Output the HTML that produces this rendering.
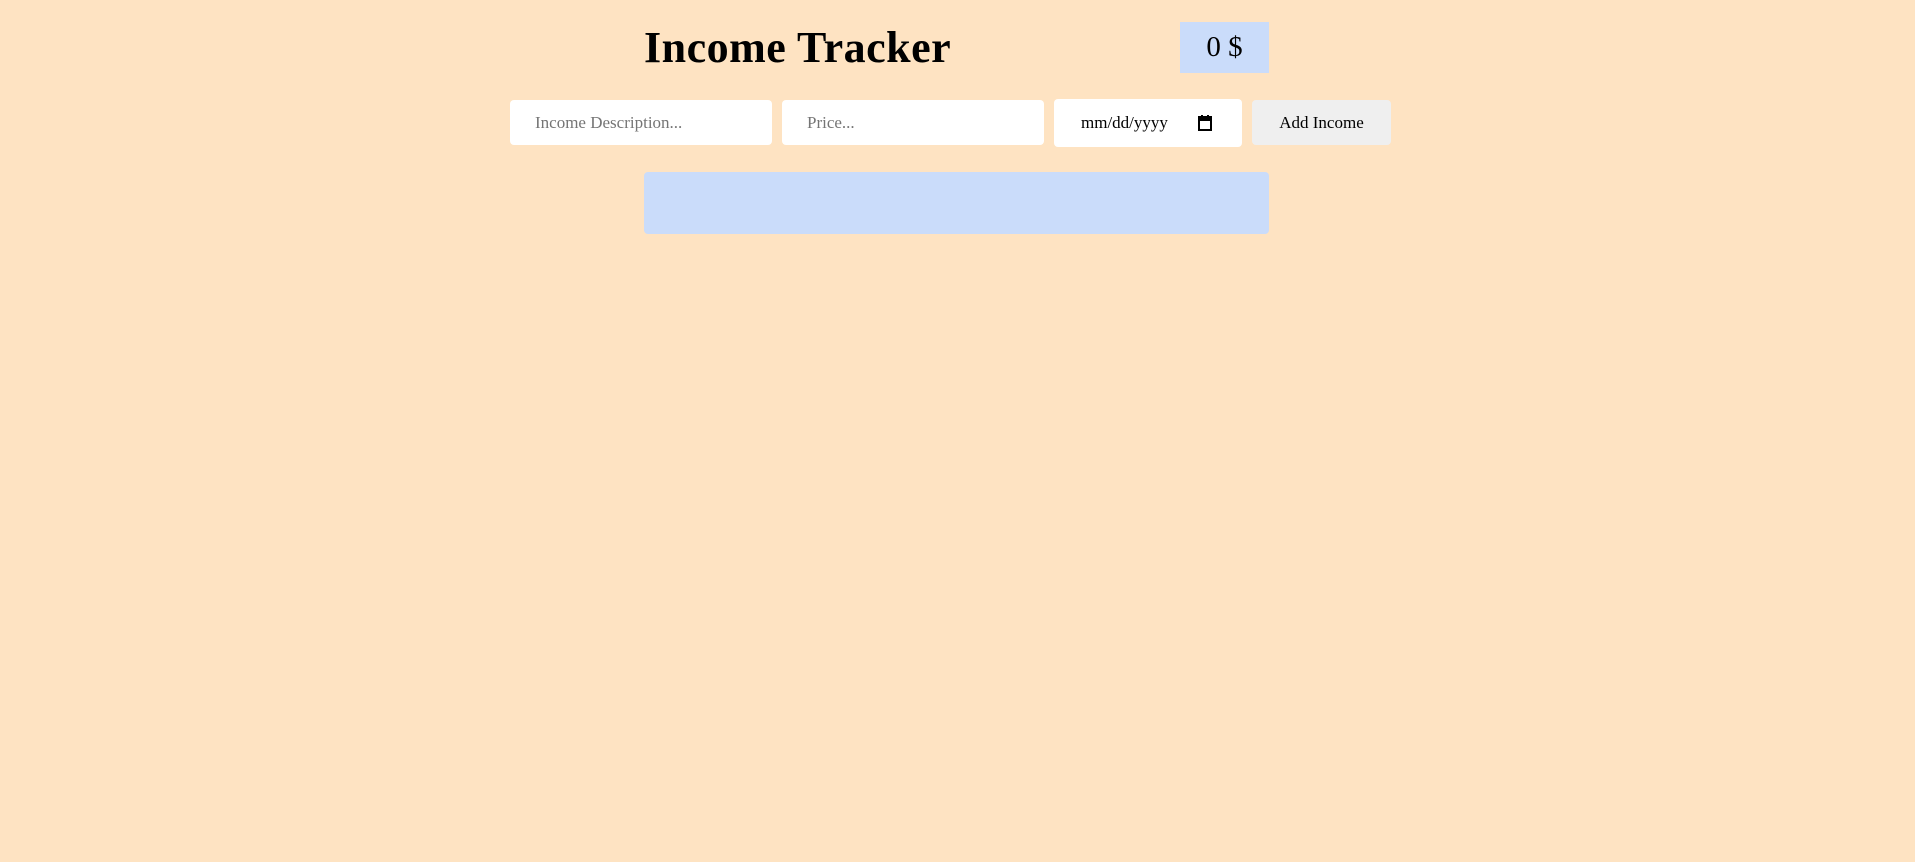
<!DOCTYPE html>
<html><head><style>
body{margin:0;background:#fee3c2;width:1915px;height:862px;font-family:"Liberation Serif",serif;position:relative;overflow:hidden}
.a{position:absolute;box-sizing:border-box}
h1{position:absolute;left:644px;top:20px;margin:0;font-size:44px;font-weight:bold;letter-spacing:0.5px;line-height:56px}
.bal{left:1180px;top:22px;width:89px;height:51px;background:#cadcfa;font-size:29px;text-align:center;line-height:51px}
.in{background:#fff;border-radius:4px;height:45px;top:100px;font-size:17px;line-height:45px;color:#757575;padding-left:25px}
.btn{left:1252px;top:100px;width:139px;height:45px;background:#efefef;border-radius:4px;font-size:17px;text-align:center;line-height:45px;color:#000}
.list{left:644px;top:172px;width:625px;height:62px;background:#cadcfa;border-radius:4px}
</style></head><body>
<h1>Income Tracker</h1>
<div class="a bal">0 $</div>
<div class="a in" style="left:510px;width:262px">Income Description...</div>
<div class="a in" style="left:782px;width:262px">Price...</div>
<div class="a in" style="left:1054px;width:188px;top:99px;height:48px;line-height:48px;color:#000;padding-left:27px">mm/dd/yyyy
<svg style="position:absolute;left:144px;top:16px" width="14" height="16" viewBox="0 0 14 16"><rect x="1" y="2" width="12" height="13" fill="none" stroke="#000" stroke-width="2"/><rect x="1" y="2" width="12" height="4" fill="#000"/><rect x="3" y="0" width="2" height="3" fill="#000"/><rect x="9" y="0" width="2" height="3" fill="#000"/></svg></div>
<div class="a btn">Add Income</div>
<div class="a list"></div>
</body></html>
